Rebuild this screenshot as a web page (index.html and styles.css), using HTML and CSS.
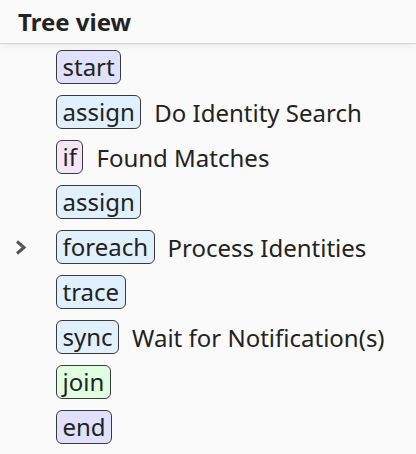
FILE: index.html
```html
<!DOCTYPE html>
<html>
<head>
<meta charset="utf-8">
<link rel="stylesheet" href="styles.css">
</head>
<body>
<div class="header"><span class="title">Tree view</span></div>
<div class="tree">
  <div class="row"><span class="toggle"></span><span class="tag t-start">start</span></div>
  <div class="row"><span class="toggle"></span><span class="tag t-assign">assign</span><span class="label">Do Identity Search</span></div>
  <div class="row"><span class="toggle"></span><span class="tag t-if">if</span><span class="label">Found Matches</span></div>
  <div class="row"><span class="toggle"></span><span class="tag t-assign">assign</span></div>
  <div class="row"><span class="toggle"><svg width="14" height="18" viewBox="0 0 14 18"><path d="M3 3.5 L10 9.5 L3 15.5" fill="none" stroke="#555" stroke-width="3"/></svg></span><span class="tag t-assign">foreach</span><span class="label">Process Identities</span></div>
  <div class="row"><span class="toggle"></span><span class="tag t-assign">trace</span></div>
  <div class="row"><span class="toggle"></span><span class="tag t-assign">sync</span><span class="label">Wait for Notification(s)</span></div>
  <div class="row"><span class="toggle"></span><span class="tag t-join">join</span></div>
  <div class="row"><span class="toggle"></span><span class="tag t-start">end</span></div>
</div>
</body>
</html>
```
FILE: styles.css
```css
html, body {
  margin: 0;
  padding: 0;
  background: #fafafa;
  font-family: "Noto Sans", "Open Sans", sans-serif;
  color: #222;
}
.header {
  height: 43px;
  display: flex;
  align-items: center;
  padding-left: 18px;
  border-bottom: 1px solid #d4d4d4;
  box-shadow: 0 2px 8px rgba(0,0,0,0.07);
  background: #fafafa;
}
.title {
  font-weight: bold;
  font-size: 24px;
}
.tree {
  padding-top: 6px;
}
.row {
  display: flex;
  align-items: center;
  height: 34px;
  margin-bottom: 11px;
  font-size: 24px;
}
.toggle {
  width: 56px;
  display: flex;
  justify-content: flex-start;
  padding-left: 14px;
  box-sizing: border-box;
}
.tag {
  box-sizing: border-box;
  height: 34px;
  line-height: 32px;
  padding: 0 5.5px;
  border: 1px solid #3a3a3a;
  border-radius: 6px;
}
.t-start { background: #e0e0ff; }
.t-assign { background: #e0f0ff; }
.t-if { background: #f3e6f8; }
.t-join { background: #e0ffe0; }
.label {
  margin-left: 13px;
}
```
